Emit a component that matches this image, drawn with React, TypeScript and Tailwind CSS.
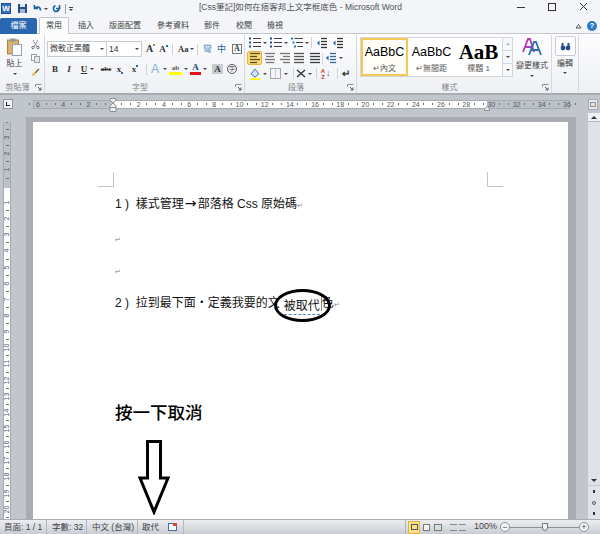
const cjk = "font-['Liberation_Sans','Noto_Sans_CJK_TC',sans-serif]";

function Drop() {
  return <span className="mx-[2px] inline-block h-0 w-[4px] shrink-0 border-x-[2px] border-t-[2px] border-x-transparent border-t-[#444]" />;
}

function Sep({ className = "" }: { className?: string }) {
  return <span className={`h-[11px] w-px shrink-0 bg-[#cfd2d7] ${className}`} />;
}

// small "rows of text" glyph used all over the paragraph group
function Rows({ kind, color = "#4c5158" }: { kind: "bullet" | "number" | "multi" | "indent" | "left" | "center" | "right" | "justify"; color?: string }) {
  const marker = kind === "bullet" || kind === "number" || kind === "multi";
  const rows = [1.5, 4.5, 7.5, 10.5];
  if (marker) {
    return (
      <svg width="12" height="11" viewBox="0 0 12 11" className="shrink-0">
        {[1.5, 5.5, 9.5].map((y, i) => (
          <g key={y}>
            <rect x={kind === "multi" ? i * 1.5 : 0} y={y - 1} width="2" height="2" fill={kind === "multi" ? "#3579bd" : "#1f4e8c"} />
            <path d={`M${kind === "multi" ? 3.5 + i * 1.5 : 4} ${y}H12`} stroke="#3a3f46" />
          </g>
        ))}
      </svg>
    );
  }
  return (
    <svg width="12" height="12" viewBox="0 0 12 12" className="shrink-0">
      {rows.map((y, i) => {
        const short = i % 2 === 1 && kind !== "justify";
        const x1 = kind === "right" && short ? 4 : kind === "center" && short ? 2 : kind === "indent" ? 5 : 1;
        const x2 = kind === "left" && short ? 8 : kind === "center" && short ? 10 : 11;
        return <path key={y} d={`M${x1} ${y}H${x2}`} stroke={color} strokeWidth="1.3" />;
      })}
      {kind === "indent" && <path d="M3.5 3.5L1 6L3.5 8.5Z" fill="#1f5fa8" />}
    </svg>
  );
}

function Launcher() {
  return (
    <svg width="7" height="7" viewBox="0 0 7 7" className="shrink-0">
      <path d="M.5 3V.5H6.5" fill="none" stroke="#8a8f96" />
      <path d="M3 3L6 6M6 3.5V6H3.5" fill="none" stroke="#55595f" />
    </svg>
  );
}

function Group({ w, label, children }: { w: string; label: string; children: React.ReactNode }) {
  return (
    <div className={`flex shrink-0 flex-col border-r border-[#d5d8dc] ${w}`}>
      <div className="h-[47px]">{children}</div>
      <div className="flex h-[11px] items-center justify-between pr-[2px]">
        <span className="w-full text-center text-[8px] leading-none text-[#7f858c]">{label}</span>
        <Launcher />
      </div>
    </div>
  );
}

function Style({ sample, label, active, serif }: { sample: string; label: string; active?: boolean; serif?: boolean }) {
  return (
    <div className={`flex h-[38px] w-[47px] shrink-0 flex-col items-center overflow-hidden ${active ? "border-2 border-[#f2c955] bg-[#fffdf5] pt-[2px]" : "pt-[4px]"}`}>
      <span className={serif ? "h-[20px] font-['Liberation_Serif',serif] text-[21px] font-bold leading-[20px] text-black" : "h-[20px] text-[12.5px] leading-[20px] text-black"}>{sample}</span>
      <span className="mt-[2px] whitespace-nowrap text-[8px] leading-[10px] text-[#555]">{label}</span>
    </div>
  );
}

function HRuler() {
  const labels = [6, 4, 2, 0, 2, 4, 6, 8, 10, 12, 14, 16, 18, 20, 22, 24, 26, 28, 30, 32, 34, 36];
  return (
    <div className="relative flex h-[9px] w-[537px] overflow-visible border border-[#a6abb2] bg-[#bcc1c7]">
      <div className="ml-[79px] h-full w-[374px] bg-white" />
      <div className="absolute left-[-8.6px] top-0 flex h-full items-center">
        {labels.map((n, i) => (
          <span key={i} className="flex w-[25.2px] shrink-0 items-center justify-between px-[4px] text-[7px] leading-none text-[#54585e]">
            <span className="h-[2px] w-px bg-[#6b7077]" />
            {n === 0 ? "" : n}
            <span className="h-[2px] w-px bg-[#6b7077]" />
          </span>
        ))}
      </div>
      <svg width="8" height="14" viewBox="0 0 8 14" className="absolute left-[75px] top-[-3px]">
        <path d="M1 .5H7V2L4 5L1 2ZM4 5L7 8V13.5H1V8Z" fill="#eef0f2" stroke="#8b9097" />
        <path d="M1 9.5H7" stroke="#8b9097" />
      </svg>
      <svg width="6" height="5" viewBox="0 0 6 5" className="absolute left-[450px] top-[5px]">
        <path d="M3 .5L5.5 3V4.5H.5V3Z" fill="#eef0f2" stroke="#8b9097" />
      </svg>
    </div>
  );
}

function VCell({ n }: { n: number }) {
  return (
    <span className="flex h-[16.15px] shrink-0 flex-col items-center">
      <span className="flex h-[15.15px] items-center">
        <span className="-rotate-90 text-[7px] leading-none text-[#54585e]">{n}</span>
      </span>
      <span className="h-px w-[3px] bg-[#6b7077]" />
    </span>
  );
}

function VRuler() {
  return (
    <div className="mt-[9px] flex w-[8px] flex-col overflow-hidden border-x border-[#a6abb2]">
      <div className="h-[66px] shrink-0 overflow-hidden bg-[#bcc1c7]">
        <div className="mt-[-8px]">
          {[4, 3, 2, 1].map((n) => (
            <VCell key={n} n={n} />
          ))}
        </div>
      </div>
      <div className="flex flex-1 flex-col bg-white pt-[7px]">
        {Array.from({ length: 20 }, (_, i) => (
          <VCell key={i} n={i + 1} />
        ))}
      </div>
    </div>
  );
}

export default function App() {
  const para = <span className="text-[7px] text-[#888]">↵</span>;
  return (
    <div className={`flex h-[534px] w-[600px] flex-col overflow-hidden bg-[#c1c6cc] ${cjk}`}>
      {/* title bar */}
      <div className="relative flex h-[17px] items-center bg-[#f3f5f8]">
        <div className="ml-[1px] flex h-[11px] w-[10px] items-center justify-center border border-[#1f4e96] bg-[#3a73bd] text-[8px] font-bold leading-none text-white">W</div>
        <svg width="9" height="9" viewBox="0 0 9 9" className="ml-[7px]">
          <rect x="0" y="0" width="9" height="9" fill="#2b4c8a" />
          <rect x="2" y="0" width="5" height="3" fill="#dbe6f5" />
          <rect x="2" y="5" width="5" height="4" fill="#9fb6d6" />
        </svg>
        <svg width="9" height="9" viewBox="0 0 9 9" className="ml-[6px]">
          <path d="M1.5 1v3.5h3.5M2 4.5C3.5 2 7.5 2.5 7.5 6.5" fill="none" stroke="#1d5fa8" strokeWidth="1.6" />
        </svg>
        <Drop />
        <svg width="9" height="9" viewBox="0 0 9 9" className="ml-[2px]">
          <path d="M7.5 1v3.5H4M7.2 4.5C6.5 8 2 8.5 1.5 5c-.2-1.5.8-3 2-3.3" fill="none" stroke="#1d5fa8" strokeWidth="1.6" />
        </svg>
        <span className="ml-[4px] h-[10px] w-px bg-[#9aa0a8]" />
        <span className="ml-[3px] flex flex-col items-center gap-px">
          <span className="h-px w-[4px] bg-[#444]" />
          <span className="h-0 w-0 border-x-[2px] border-t-[2px] border-x-transparent border-t-[#444]" />
        </span>
        <span className="absolute left-[199px] top-[1px] whitespace-nowrap text-[8.5px] leading-[13px] text-[#4d5156]">[Css筆記]如何在痞客邦上文字框底色 - Microsoft Word</span>
        <span className="absolute left-[517px] top-[7px] h-px w-[8px] bg-[#333]" />
        <span className="absolute left-[548px] top-[3px] h-[8px] w-[8px] border border-[#333]" />
        <svg width="9" height="9" viewBox="0 0 9 9" className="absolute left-[579px] top-[2px]">
          <path d="M1 1L8 8M8 1L1 8" stroke="#333" />
        </svg>
      </div>

      {/* tabs */}
      <div className="relative flex h-[17px] items-end border-b border-[#c4c8cd] bg-[#f3f5f8] text-[8px] text-[#444]">
        <div className="mb-[-1px] flex h-[16px] w-[37px] items-center justify-center rounded-t-[2px] bg-[#2a67b1] text-white">檔案</div>
        <div className="ml-[2px] mb-[-1px] flex h-[17px] w-[30px] items-center justify-center rounded-t-[2px] border border-b-0 border-[#c4c8cd] bg-[#fdfdfe] text-[#333]">常用</div>
        <div className="flex h-[15px] items-center whitespace-nowrap">
          <span className="ml-[9px]">插入</span>
          <span className="ml-[15px]">版面配置</span>
          <span className="ml-[16px]">參考資料</span>
          <span className="ml-[15px]">郵件</span>
          <span className="ml-[16px]">校閱</span>
          <span className="ml-[15px]">檢視</span>
        </div>
        <svg width="7" height="6" viewBox="0 0 7 6" className="absolute left-[575px] top-[6px]">
          <path d="M1 5L3.5 1.5L6 5Z" fill="none" stroke="#555" />
        </svg>
        <span className="absolute left-[587px] top-[4px] flex h-[10px] w-[10px] items-center justify-center rounded-full bg-[#2a77c8] text-[8px] font-bold leading-none text-white">?</span>
      </div>

      {/* ribbon */}
      <div className="flex h-[61px] border-b-2 border-[#a9adb3] bg-gradient-to-b from-[#fdfdfe] to-[#eef0f3] pt-px">
        <Group w="w-[45px]" label="剪貼簿">
          <div className="flex h-full">
            <div className="flex w-[29px] flex-col items-center pt-[3px]">
              <svg width="15" height="18" viewBox="0 0 15 18">
                <rect x=".5" y="2" width="11" height="14" fill="#d9b36c" stroke="#a98546" />
                <rect x="3.5" y=".5" width="5" height="3" fill="#8d96a3" />
                <rect x="5.5" y="6.5" width="9" height="11" fill="#fdfdfd" stroke="#8fa1b8" />
              </svg>
              <span className="mt-[2px] text-[8px] leading-[12px] text-[#444]">貼上</span>
              <span className="mt-[3px] flex"><Drop /></span>
            </div>
            <div className="flex w-[12px] flex-col items-center gap-[5px] pt-[5px]">
              <svg width="9" height="9" viewBox="0 0 9 9"><path d="M2 0L6 7M7 0L3 7" stroke="#8a8f96" /><circle cx="2" cy="7.5" r="1.2" fill="none" stroke="#6b7077" /><circle cx="7" cy="7.5" r="1.2" fill="none" stroke="#6b7077" /></svg>
              <svg width="9" height="9" viewBox="0 0 9 9"><rect x=".5" y=".5" width="5" height="6" fill="#fff" stroke="#9aa0a8" /><rect x="3.5" y="2.5" width="5" height="6" fill="#e6e8ec" stroke="#9aa0a8" /></svg>
              <svg width="9" height="9" viewBox="0 0 9 9"><path d="M8 1L4 5" stroke="#7a5a25" strokeWidth="1.5" /><path d="M1 8L2 4.5L5 6.5Z" fill="#e5b93c" /></svg>
            </div>
          </div>
        </Group>

        <Group w="w-[200px]" label="字型">
          <div className="flex items-center pl-[2px] pt-[6px]">
            <div className="flex h-[16px] w-[60px] items-center justify-between border border-[#c8ccd2] bg-white pl-[2px] text-[8px] text-[#333]">微軟正黑體<Drop /></div>
            <div className="flex h-[16px] w-[35px] items-center justify-between border border-l-0 border-[#c8ccd2] bg-white pl-[2px] text-[8.5px] text-[#333]">14<Drop /></div>
            <span className="ml-[2px] flex w-[13px] items-start justify-center font-['Liberation_Serif',serif] text-[10px] font-bold leading-none text-[#333]">A<span className="h-[2px] w-[2px] bg-[#b8860b]" /></span>
            <span className="flex w-[13px] items-start justify-center font-['Liberation_Serif',serif] text-[9px] font-bold leading-none text-[#333]">A<span className="h-[2px] w-[2px] bg-[#2a67b1]" /></span>
            <Sep className="ml-[2px]" />
            <span className="ml-[5px] flex w-[19px] items-center font-['Liberation_Serif',serif] text-[8.5px] font-bold text-[#333]">Aa<Drop /></span>
            <Sep />
            <span className="ml-[5px] w-[10px] text-[9px] leading-none text-[#5f8fc2]">彎</span>
            <span className="ml-[4px] w-[11px] text-[9px] leading-none text-[#1f5fa8]">中</span>
            <span className="ml-[4px] flex h-[10px] w-[10px] items-center justify-center border border-[#777] font-['Liberation_Serif',serif] text-[8px] font-bold leading-none text-[#333]">A</span>
          </div>
          <div className="mt-[5px] flex h-[14px] items-center pl-[5px] font-['Liberation_Serif',serif] text-[9px] font-bold leading-none text-[#333]">
            <span className="w-[10px] text-center">B</span>
            <span className="ml-[4px] w-[10px] text-center italic">I</span>
            <span className="ml-[6px] w-[8px] text-center underline">U</span>
            <Drop />
            <span className="ml-[4px] w-[12px] text-center text-[7px] line-through">abc</span>
            <span className="ml-[2px] flex w-[12px] items-end justify-center">x<span className="h-[2px] w-[2px] bg-[#2a67b1]" /></span>
            <span className="ml-[3px] flex w-[12px] items-start justify-center">x<span className="h-[2px] w-[2px] bg-[#2a67b1]" /></span>
            <Sep className="ml-[5px]" />
            <span className="ml-[2px] w-[12px] text-center font-['Liberation_Sans',sans-serif] text-[12px] font-normal text-[#7fb2e5]">A</span>
            <Drop />
            <span className="w-[13px] border-b-[3px] border-[#ffff00] text-center text-[7px] leading-[8px] text-[#555]">ab</span>
            <Drop />
            <span className="w-[11px] border-b-[3px] border-[#e8101a] text-center leading-[9px] text-[#223f7a]">A</span>
            <Drop />
            <span className="ml-[3px] w-[11px] bg-[#c8ccd2] text-center leading-[10px]">A</span>
            <span className="ml-[4px] flex h-[10px] w-[10px] items-center justify-center rounded-full border border-[#555] text-[6px] font-normal">字</span>
          </div>
        </Group>

        <Group w="w-[112px]" label="段落">
          <div className="flex h-[13px] items-center pl-[4px] pt-[2px]">
            <Rows kind="bullet" /><Drop />
            <span className="ml-px" /><Rows kind="number" /><Drop />
            <span className="ml-px" /><Rows kind="multi" /><Drop />
            <Sep />
            <span className="ml-[4px]" /><Rows kind="indent" color="#333" />
            <span className="ml-[4px]" /><Rows kind="indent" color="#333" />
          </div>
          <div className="mt-[3px] flex h-[14px] items-center pl-[2px]">
            <span className="flex h-[14px] w-[15px] items-center justify-center rounded-[2px] border border-[#e9b23f] bg-[#fbd978]"><Rows kind="left" color="#5c4a20" /></span>
            <span className="ml-[2px]" /><Rows kind="center" color="#777" />
            <span className="ml-[3px]" /><Rows kind="right" color="#777" />
            <span className="ml-[2px]" /><Rows kind="justify" color="#555" />
            <span className="ml-[4px]" /><Rows kind="justify" color="#3a3f46" />
            <Sep className="ml-[1px]" />
            <span className="ml-[2px]" /><Rows kind="indent" color="#33689f" /><Drop />
          </div>
          <div className="mt-[2px] flex h-[13px] items-center pl-[4px]">
            <svg width="12" height="12" viewBox="0 0 12 12" className="shrink-0">
              <path d="M6 1L10 6L6 9L2 6Z" fill="#d4e2f2" stroke="#4a7ab0" />
              <path d="M1 11H11" stroke="#ffff00" strokeWidth="2" />
            </svg>
            <Drop />
            <span className="ml-px flex h-[11px] w-[11px] shrink-0 items-center justify-center border border-[#a3a7ad] bg-[#f4f4f4]"><span className="h-full w-px bg-[#c8ccd2]" /></span>
            <span className="w-px" /><Drop />
            <Sep className="ml-[3px]" />
            <svg width="10" height="9" viewBox="0 0 10 9" className="ml-[2px] shrink-0">
              <path d="M1 1L9 8M9 1L1 8" stroke="#333" strokeWidth="1.4" />
            </svg>
            <Drop />
            <Sep className="ml-[2px]" />
            <span className="ml-[3px] w-[6px] text-center text-[6px] font-bold leading-[6px] text-[#c0392b]">A<br />Z</span>
            <span className="w-[6px] text-[9px] leading-none text-[#33689f]">↓</span>
            <Sep className="ml-[5px]" />
            <span className="ml-[4px] text-[10px] font-bold leading-none text-[#333]">↵</span>
          </div>
        </Group>

        <Group w="w-[195px]" label="樣式">
          <div className="flex pl-[3px] pt-[2px]">
            <div className="flex h-[40px] w-[143px] items-start overflow-hidden border border-[#d3d6da] bg-white">
              <Style sample="AaBbC" label="↵內文" active />
              <Style sample="AaBbC" label="↵無間距" />
              <Style sample="AaB" label="標題 1" serif />
            </div>
            <div className="flex h-[40px] w-[10px] flex-col border border-l-0 border-[#d3d6da] bg-[#f6f7f8]">
              <span className="flex flex-1 items-center justify-center border-b border-[#d3d6da]"><span className="h-0 w-0 border-x-[2px] border-b-[2px] border-x-transparent border-b-[#aaa]" /></span>
              <span className="flex flex-1 items-center justify-center border-b border-[#d3d6da]"><span className="h-0 w-0 border-x-[2px] border-t-[2px] border-x-transparent border-t-[#444]" /></span>
              <span className="flex flex-1 items-center justify-center"><span className="h-0 w-0 border-x-[2px] border-t-[2px] border-x-transparent border-t-[#444]" /></span>
            </div>
            <div className="flex flex-1 flex-col items-center">
              <svg width="20" height="20" viewBox="0 0 20 20">
                <path d="M1 15L6 2H8L12 15M3.5 10H10" fill="none" stroke="#b03bb5" strokeWidth="1.8" />
                <path d="M7 18L12 5H14L19 18M9.5 13H16.5" fill="none" stroke="#2f6db5" strokeWidth="1.8" />
              </svg>
              <span className="mt-[3px] whitespace-nowrap text-[8px] leading-[12px] text-[#444]">變更樣式</span>
              <span className="mt-[3px] flex"><Drop /></span>
            </div>
          </div>
        </Group>

        <div className="flex h-[58px] w-[27px] shrink-0 flex-col items-center border-r border-[#d5d8dc] pt-px">
          <div className="flex h-[20px] w-[21px] items-center justify-center rounded-[2px] border border-[#c8ccd2] bg-white">
            <svg width="11" height="9" viewBox="0 0 11 9"><circle cx="3" cy="6" r="2.4" fill="#2b4c8a" /><circle cx="8" cy="6" r="2.4" fill="#2b4c8a" /><path d="M2.5 1v4M8.5 1v4" stroke="#2b4c8a" strokeWidth="2" /></svg>
          </div>
          <span className="mt-[2px] text-[8px] leading-[12px] text-[#444]">編輯</span>
          <span className="mt-[2px] flex"><Drop /></span>
        </div>
      </div>

      {/* horizontal ruler row */}
      <div className="relative flex h-[18px] shrink-0 items-center bg-[#c1c6cc]">
        <span className="ml-[3px] flex h-[10px] w-[10px] items-center justify-center border border-[#8f949b] bg-[#f4f5f7]">
          <span className="h-[4px] w-[4px] border-b border-l border-[#222]" />
        </span>
        <span className="ml-[20px]"><HRuler /></span>
        <span className="ml-[18px] flex h-[11px] w-[10px] items-center justify-center border border-[#a6abb2] bg-[#e8ebef]">
          <span className="h-[5px] w-[6px] border border-[#8a8f96] bg-[#f6e3c5]" />
        </span>
      </div>

      {/* body */}
      <div className="flex min-h-0 flex-1">
        <div className="flex w-[26px] shrink-0 pl-[3px]">
          <VRuler />
        </div>
        <div className="mt-[4px] flex min-w-0 flex-1 flex-col bg-[#a9adb3] pl-[7px] pr-[8px] pt-[5px]">
          <div className="relative flex-1 bg-white pl-[82px] pt-[73px] text-[12px] leading-[18px] text-[#111]">
            <p className="h-[36px] whitespace-pre">1 )  樣式管理<span className="inline-block w-[14px] text-center font-['DejaVu_Sans',sans-serif] text-[14px] leading-[14px]">→</span>部落格 Css 原始碼{para}</p>
            <p className="h-[32px] text-[7px] text-[#888]">↵</p>
            <p className="h-[31px] text-[7px] text-[#888]">↵</p>
            <p className="h-[108px] whitespace-pre">2 )  拉到最下面・定義我要的文<span className="relative top-[3px] ml-[4px] border-b border-dashed border-[#5d87c0] pb-px">被取代</span><span className="relative ml-px inline-block h-[15px] w-px bg-[#888] align-middle" />色{para}</p>
            <p className="text-[17.5px] font-medium leading-[22px] text-black">按一下取消</p>

            {/* crop marks and annotations, drawn over the page */}
            <span className="absolute left-[65px] top-[50px] h-[15px] w-[16px] border-b border-r border-[#c4c4c4]" />
            <span className="absolute left-[454px] top-[50px] h-[15px] w-[16px] border-b border-l border-[#c4c4c4]" />
            <span className="absolute left-[241px] top-[167px] h-[33px] w-[57px] rounded-[50%] border-[3px] border-black" />
            <svg width="34" height="76" viewBox="0 0 34 76" className="absolute left-[104px] top-[317px]">
              <path d="M10.5 2.5H23.5V39H31L17 73L3 39H10.5Z" fill="#fff" stroke="#000" strokeWidth="3" />
            </svg>
          </div>
        </div>
        <div className="w-[12px] shrink-0" />
        <div className="flex w-[12px] shrink-0 flex-col items-center bg-[#dfe3e9]">
          <span className="flex h-[9px] w-full items-center justify-center border-b border-[#b3b7bd] bg-[#eef0f3]">
            <span className="h-0 w-0 border-x-[3px] border-b-[3px] border-x-transparent border-b-[#333]" />
          </span>
          <span className="flex-1" />
          <span className="flex h-[11px] w-full items-center justify-center border-b border-[#c4c8cd]">
            <span className="h-0 w-0 border-x-[3px] border-t-[3px] border-x-transparent border-t-[#333]" />
          </span>
          <span className="flex h-[11px] items-center"><span className="h-[3px] w-[2px] bg-[#333]" /></span>
          <span className="flex h-[11px] items-center"><span className="h-[4px] w-[4px] rounded-full border border-[#555]" /></span>
          <span className="flex h-[11px] items-center"><span className="h-[3px] w-[2px] bg-[#333]" /></span>
        </div>
      </div>

      {/* status bar */}
      <div className="flex h-[15px] shrink-0 items-center whitespace-nowrap border-t border-[#a9adb3] bg-gradient-to-b from-[#eceef1] to-[#c9cdd3] text-[8.5px] text-[#3f4348]">
        <span className="flex h-full w-[47px] items-center border-r border-[#b3b7bd] pl-[4px]">頁面: 1 / 1</span>
        <span className="flex h-full w-[40px] items-center border-r border-[#b3b7bd] pl-[5px]">字數: 32</span>
        <span className="flex h-full w-[51px] items-center border-r border-[#b3b7bd] pl-[5px]">中文 (台灣)</span>
        <span className="flex h-full w-[46px] items-center border-r border-[#b3b7bd] pl-[4px]">
          取代
          <svg width="9" height="8" viewBox="0 0 9 8" className="ml-[9px]"><rect x=".5" y=".5" width="8" height="7" fill="#fff" stroke="#3a6fb0" /><rect x="5" y="0" width="4" height="3" fill="#d9443a" /></svg>
        </span>
        <div className="ml-[221px] flex h-full items-center">
          <span className="h-full w-px bg-[#b3b7bd]" />
          <span className="ml-[2px] flex h-[13px] w-[12px] items-center justify-center border border-[#e9b23f] bg-[#fbe08a]"><span className="h-[6px] w-[7px] border border-[#555]" /></span>
          <span className="ml-[3px] h-[7px] w-[7px] border border-[#777] bg-[#f3f3f3]" />
          <span className="ml-[4px] h-[7px] w-[8px] border border-[#777] bg-[#cfe3d6]" />
          <span className="ml-[8px] h-[7px] w-[7px] border-y border-[#888]" />
          <span className="ml-[2px] h-[7px] w-[7px] border-y border-[#888]" />
          <span className="ml-[8px] w-[22px] text-[9px]">100%</span>
          <span className="ml-[4px] flex h-[10px] w-[10px] items-center justify-center rounded-full border border-[#8c9198] bg-[#f6f7f8] text-[9px] leading-none">−</span>
          <span className="relative h-px w-[69px] bg-[#8c9198]">
            <span className="absolute left-[32px] top-[-4px] h-[8px] w-[6px] rounded-b-[3px] border border-[#777] bg-[#f4f4f4]" />
          </span>
          <span className="flex h-[10px] w-[10px] items-center justify-center rounded-full border border-[#8c9198] bg-[#f6f7f8] text-[9px] leading-none">+</span>
        </div>
      </div>
    </div>
  );
}
